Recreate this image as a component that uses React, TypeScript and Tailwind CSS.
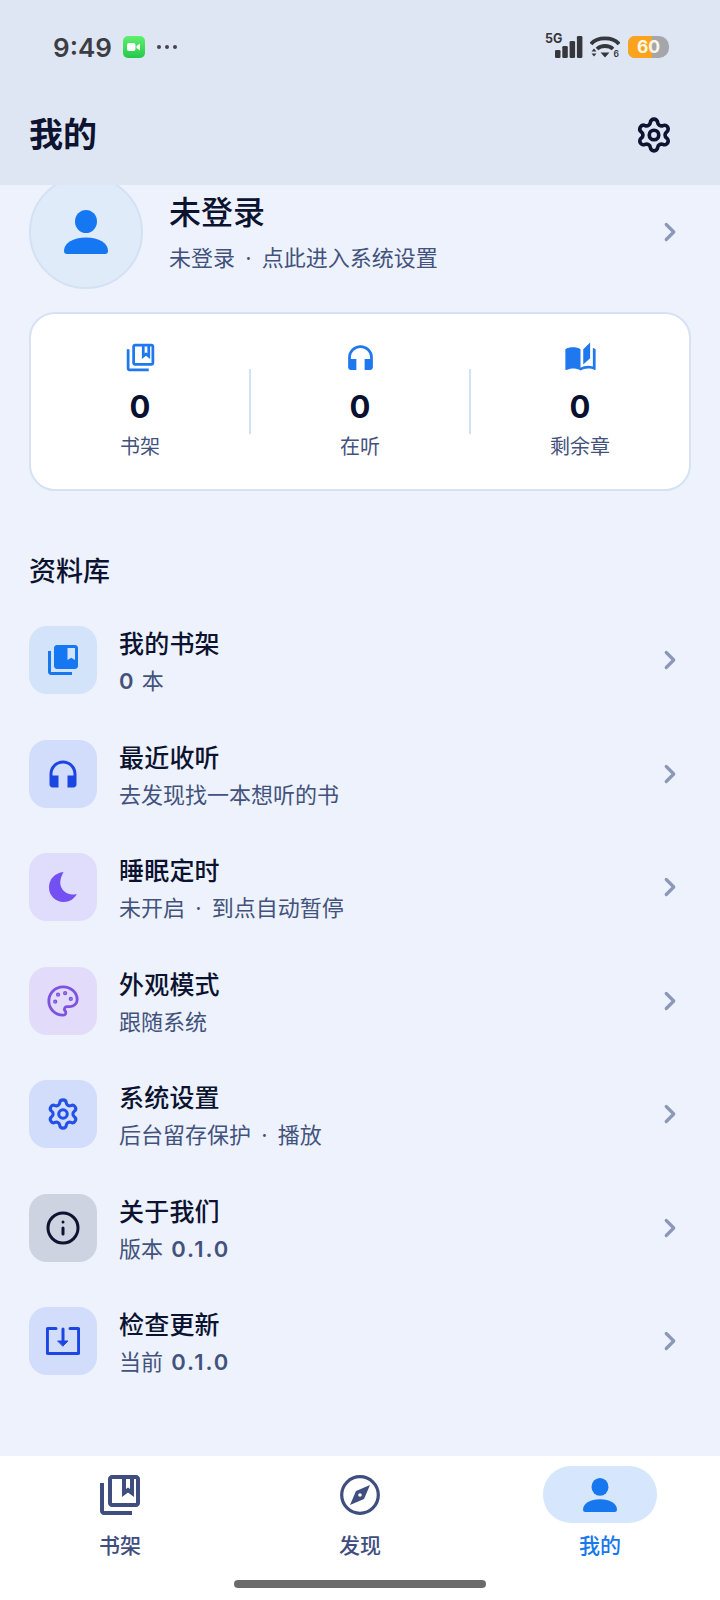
import type { ReactNode } from 'react';
import { ChevronRight, Info, Palette, Settings } from 'lucide-react';
import {
  MdAutoStories,
  MdCollectionsBookmark,
  MdHeadphones,
  MdOutlineCollectionsBookmark,
} from 'react-icons/md';

function PersonIcon({ className }: { className: string }) {
  return (
    <svg viewBox="0 0 44 44" className={className} fill="currentColor">
      <ellipse cx="22" cy="11.500" rx="11" ry="11.500" />
      <path d="M0 41c0-8 9-13.500 22-13.500S44 33 44 41a3 3 0 0 1-3 3H3a3 3 0 0 1-3-3z" />
    </svg>
  );
}

function MoonIcon({ className }: { className: string }) {
  return (
    <svg viewBox="0 0 28 30" className={className} fill="currentColor">
      <path d="M14.500 0C6 1 0 7 0 15.500 0 23.500 6.500 30 14.500 30c6 0 10.500-3 13.500-8-1 .4-3 .6-5 .4C15 22 10 15 11.500 8c.5-3 2-6 3-8z" />
    </svg>
  );
}

function UpdateIcon({ className }: { className: string }) {
  return (
    <svg viewBox="0 0 34 28" className={className} fill="none" stroke="currentColor" strokeWidth="3" strokeLinecap="round" strokeLinejoin="round">
      <path d="M10 1.500H2a.6.6 0 0 0-.6.6v23.800a.6.6 0 0 0 .6.6h30a.6.6 0 0 0 .6-.6V2.100a.6.6 0 0 0-.6-.6h-8" />
      <path d="M17 2v13" />
      <path d="M12 14h10l-5 5z" fill="currentColor" strokeWidth="1" />
    </svg>
  );
}

function CompassIcon({ className }: { className: string }) {
  return (
    <svg viewBox="0 0 40 40" className={className} fill="none">
      <circle cx="20" cy="20" r="18.300" stroke="currentColor" strokeWidth="3.200" />
      <path d="M30 10 16 16 10 30l14-6zM20 18.200a1.800 1.800 0 1 1 0 3.600 1.800 1.800 0 0 1 0-3.600z" fill="currentColor" fillRule="evenodd" />
    </svg>
  );
}

function StatusBar() {
  return (
    <div className="flex h-[92px] items-center justify-between pl-[53px] pr-[51px] pt-[2px]">
      <div className="flex items-center">
        <span className="font-['Inter',sans-serif] text-[26px] font-semibold text-[#3b3d42]">9:49</span>
        <div className="ml-[11px] flex h-[22px] w-[22px] items-center justify-center rounded-[5px] bg-linear-to-b from-[#5ef06e] to-[#1fc94b]">
          <svg viewBox="0 0 14 10" className="w-[14px]" fill="white">
            <rect x="0" y="1" width="8.500" height="8" rx="2" />
            <path d="M9.500 4 13 1.500v7L9.500 6z" />
          </svg>
        </div>
        <div className="ml-[12px] flex gap-[4px]">
          <span className="h-[4px] w-[4px] rounded-full bg-[#44464c]" />
          <span className="h-[4px] w-[4px] rounded-full bg-[#44464c]" />
          <span className="h-[4px] w-[4px] rounded-full bg-[#44464c]" />
        </div>
      </div>
      <div className="flex items-center">
        <div className="relative -mt-[3px] h-[25px] w-[38px] text-[#35373c]">
          <span className="absolute left-0 top-0 font-['Inter',sans-serif] text-[12.500px] font-bold leading-[12px]">5G</span>
          <svg viewBox="0 0 38 25" className="h-[25px] w-[38px]" fill="currentColor">
            <rect x="10" y="17" width="5.500" height="8" rx="1.300" />
            <rect x="17.300" y="13" width="5.500" height="12" rx="1.300" />
            <rect x="24.600" y="8" width="5.500" height="17" rx="1.300" />
            <rect x="31.900" y="3" width="5.500" height="22" rx="1.300" />
          </svg>
        </div>
        <div className="relative ml-[7px] h-[24px] w-[30px] text-[#35373c]">
          <svg viewBox="0 0 30 24" className="h-[24px] w-[30px]" fill="none" stroke="currentColor" strokeWidth="3.800">
            <path d="M1 9C7 1.500 23 1.500 29 9" />
            <path d="M7 14c4-4 12-4 16 0" />
            <path d="M10.500 17.500h9L15 22.500z" fill="currentColor" stroke="none" />
            <path d="M1.500 16.500h5L4 13.500zM1.500 18.500h5L4 21.500z" fill="currentColor" stroke="none" />
          </svg>
          <span className="absolute bottom-0 right-[1px] font-['Inter',sans-serif] text-[8.500px] font-semibold leading-[9px]">6</span>
        </div>
        <div className="ml-[8px] flex h-[22px] w-[41px] rounded-l-[7px] rounded-r-[10px] bg-[#a4a6ab]">
          <div className="flex h-full w-[24px] shrink-0 items-center rounded-l-[7px] bg-[#fba31c] pl-[9px]">
            <span className="font-['Inter',sans-serif] text-[17.500px] font-bold leading-none text-[#fdf6e6]">60</span>
          </div>
        </div>
      </div>
    </div>
  );
}

type RowProps = {
  icon: ReactNode;
  tileClass: string;
  title: string;
  sub: ReactNode;
};

function LibraryRow({ icon, tileClass, title, sub }: RowProps) {
  return (
    <div className="flex h-[68px] items-center">
      <div className={`flex h-[68px] w-[68px] shrink-0 items-center justify-center rounded-[18px] ${tileClass}`}>{icon}</div>
      <div className="ml-[22px] flex-1 pt-[3px]">
        <div className="text-[25px] font-medium leading-[34px] tracking-[0.2px] text-[#0c1330]">{title}</div>
        <div className="mt-[5px] text-[22px] leading-[30px] text-[#43527c] [word-spacing:4px]">{sub}</div>
      </div>
      <ChevronRight className="mr-[6px] h-[30px] w-[30px] text-[#8c98b8]" strokeWidth={2.600} />
    </div>
  );
}

function Stat({ icon, label }: { icon: ReactNode; label: string }) {
  return (
    <div className="flex flex-1 flex-col items-center">
      <div className="flex h-[30px] items-center justify-center text-[#1f78ee]">{icon}</div>
      <div className="mt-[17px] font-['Inter',sans-serif] text-[31px] font-bold leading-[36px] text-[#0a1030]">0</div>
      <div className="mt-[8px] text-[20px] leading-[28px] text-[#43527c]">{label}</div>
    </div>
  );
}

function NavItem({ icon, label, active }: { icon: ReactNode; label: string; active?: boolean }) {
  return (
    <div className={`flex flex-col items-center ${active ? 'text-[#1677ee]' : 'text-[#3f4e7e]'}`}>
      <div className={`flex h-[57px] w-[114px] items-center justify-center rounded-[28px] ${active ? 'bg-[#d6e6fc]' : ''}`}>{icon}</div>
      <div className="mt-[8px] text-[21px] font-medium leading-[30px]">{label}</div>
    </div>
  );
}

const versionClass = '-ml-[2px] font-semibold tracking-[2px]';

export default function App() {
  return (
    <div className="flex h-[1600px] w-[720px] flex-col overflow-hidden bg-[#edf2fc] font-['Inter','Noto_Sans_CJK_SC',sans-serif]">
      <header className="relative z-10 h-[185px] shrink-0 bg-[#dfe6f3]">
        <StatusBar />
        <div className="flex items-center justify-between pl-[29px] pr-[47px] pt-[20px]">
          <h1 className="text-[34px] font-bold leading-[46px] text-[#0d1330]">我的</h1>
          <Settings className="h-[38px] w-[38px] text-[#0d1330]" strokeWidth={2.300} />
        </div>
      </header>

      <main className="flex-1 overflow-hidden px-[29px]">
        <div className="-mt-[10px] flex items-center">
          <div className="flex h-[114px] w-[114px] shrink-0 items-center justify-center rounded-full border-2 border-[#d3e1f4] bg-[#e0ebfa] text-[#1677f2]">
            <PersonIcon className="h-[44px] w-[44px]" />
          </div>
          <div className="ml-[26px] flex-1">
            <div className="text-[32px] font-medium leading-[44px] text-[#0c1330]">未登录</div>
            <div className="mt-[8px] text-[22px] leading-[30px] text-[#43527c] [word-spacing:4px]">未登录 · 点此进入系统设置</div>
          </div>
          <ChevronRight className="mr-[6px] h-[30px] w-[30px] text-[#8c98b8]" strokeWidth={2.600} />
        </div>

        <div className="mt-[23px] flex h-[179px] items-start rounded-[26px] border-2 border-[#d5e2f4] bg-white pt-[28px]">
          <Stat icon={<MdOutlineCollectionsBookmark size={33} />} label="书架" />
          <div className="mt-[27px] h-[65px] w-[2px] bg-[#d3e1f3]" />
          <Stat icon={<MdHeadphones size={33} />} label="在听" />
          <div className="mt-[27px] h-[65px] w-[2px] bg-[#d3e1f3]" />
          <Stat icon={<MdAutoStories size={33} />} label="剩余章" />
        </div>

        <h2 className="mt-[62px] text-[27px] font-medium leading-[38px] text-[#0c1330]">资料库</h2>

        <div className="mt-[35px] flex flex-col gap-[45.500px]">
          <LibraryRow
            tileClass="bg-[#d3e4fa]"
            icon={<MdCollectionsBookmark size={36} className="text-[#1677f2]" />}
            title="我的书架"
            sub={<><span className="font-semibold">0</span> <span className="-ml-[2px]">本</span></>}
          />
          <LibraryRow
            tileClass="bg-[#d2dcfb]"
            icon={<MdHeadphones size={36} className="text-[#1c46e2]" />}
            title="最近收听"
            sub="去发现找一本想听的书"
          />
          <LibraryRow
            tileClass="bg-[#e0dcfb]"
            icon={<MoonIcon className="h-[30px] w-[28px] text-[#7350f2]" />}
            title="睡眠定时"
            sub="未开启 · 到点自动暂停"
          />
          <LibraryRow
            tileClass="bg-[#e2dcfa]"
            icon={<Palette className="h-[34px] w-[34px] text-[#7d52e0]" strokeWidth={2} />}
            title="外观模式"
            sub="跟随系统"
          />
          <LibraryRow
            tileClass="bg-[#d2dcfb]"
            icon={<Settings className="h-[34px] w-[34px] text-[#2350e6]" strokeWidth={2.200} />}
            title="系统设置"
            sub="后台留存保护 · 播放"
          />
          <LibraryRow
            tileClass="bg-[#cdd3e0]"
            icon={<Info className="h-[36px] w-[36px] text-[#0d1330]" strokeWidth={2} />}
            title="关于我们"
            sub={<>版本 <span className={versionClass}>0.1.0</span></>}
          />
          <LibraryRow
            tileClass="bg-[#d2dcfb]"
            icon={<UpdateIcon className="h-[28px] w-[34px] text-[#1c46e2]" />}
            title="检查更新"
            sub={<>当前 <span className={versionClass}>0.1.0</span></>}
          />
        </div>
      </main>

      <nav className="h-[144px] shrink-0 bg-white">
        <div className="flex justify-between px-[63px] pt-[10px]">
          <NavItem icon={<MdOutlineCollectionsBookmark size={48} />} label="书架" />
          <NavItem icon={<CompassIcon className="h-[40px] w-[40px]" />} label="发现" />
          <NavItem icon={<PersonIcon className="h-[34px] w-[34px]" />} label="我的" active />
        </div>
        <div className="mx-auto mt-[19px] h-[8px] w-[252px] rounded-full bg-[#6b6b6b]" />
      </nav>
    </div>
  );
}
